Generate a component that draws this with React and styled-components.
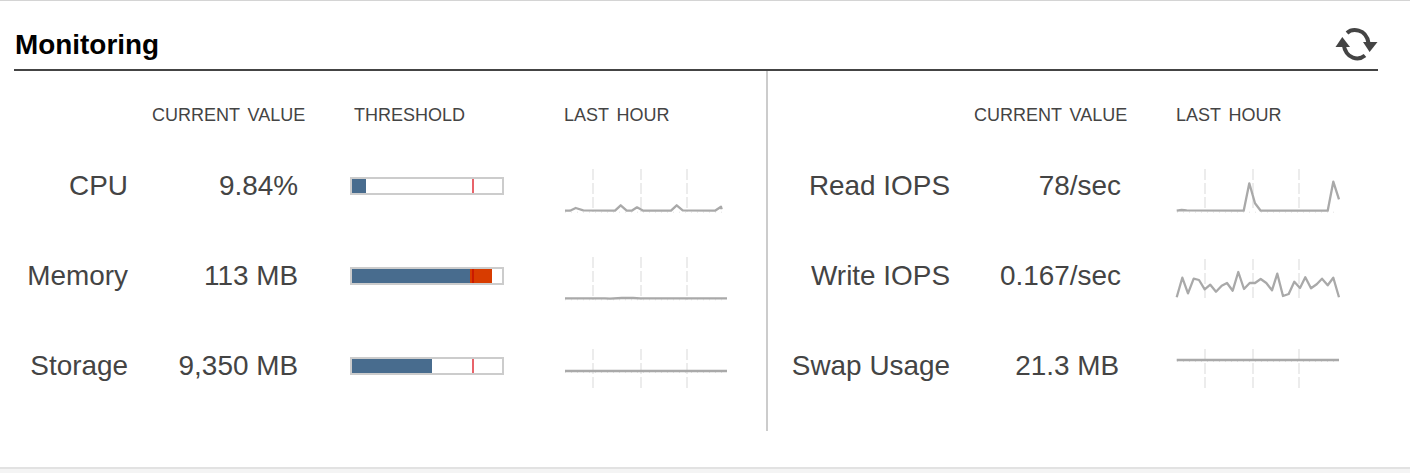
import React from "react";
import styled, { createGlobalStyle } from "styled-components";

const Global = createGlobalStyle`
  html, body { margin: 0; padding: 0; background: #fff; }
  body { font-family: "Liberation Sans", Arial, sans-serif; }
`;

const Page = styled.div`
  height: 473px;
  box-sizing: border-box;
  display: flex;
  flex-direction: column;
  border-top: 1px solid #d4d4d4;
  overflow: hidden;
`;
const Widget = styled.section`
  flex: 1;
  padding: 0 32px 0 14px;
`;
const Header = styled.header`
  height: 70px;
  box-sizing: border-box;
  display: flex;
  align-items: flex-end;
  justify-content: space-between;
  padding: 0 0 8px 1px;
  border-bottom: 2px solid #444;
`;
const Title = styled.h2`
  margin: 0;
  font-size: 27.9px;
  line-height: 32px;
  font-weight: 700;
  color: #000;
`;
const RefreshIcon = styled.svg`
  width: 46px;
  height: 36px;
  margin: 0 -1px -1px 0;
  display: block;
`;
const Body = styled.div`
  display: flex;
  height: 360px;
`;
const Panel = styled.div`
  display: grid;
  grid-template-columns: ${(p) => p.$cols};
  grid-template-rows: 70px repeat(3, 90px);
  align-content: start;
  width: ${(p) => p.$width}px;
  flex: none;
  box-sizing: border-box;
  ${(p) => p.$divided && "border-left: 2px solid #ccc;"}
`;
const Heading = styled.div`
  font-size: 18px;
  word-spacing: 2.8px;
  line-height: 22px;
  padding-top: 33px;
  padding-left: ${(p) => p.$indent || 0}px;
  color: #444;
  white-space: nowrap;
`;
const Label = styled.div`
  align-self: center;
  text-align: right;
  font-size: 27.9px;
  line-height: 32px;
  color: #444;
  white-space: nowrap;
`;
const Value = styled(Label)`
  padding-right: ${(p) => p.$inset || 0}px;
`;
const BarCell = styled.div`
  align-self: center;
`;
const Bar = styled.div`
  position: relative;
  box-sizing: border-box;
  width: 154px;
  height: 18px;
  border: 2px solid #ccc;
  background: #fff;
`;
const Fill = styled.div`
  height: 100%;
  background: ${(p) => p.$color};
`;
const Over = styled.div`
  position: absolute;
  top: 0;
  left: 118px;
  height: 100%;
  background: #d83c00;
`;
const Threshold = styled.div`
  position: absolute;
  top: 0;
  left: 120px;
  width: 2px;
  height: 100%;
  background: ${(p) => (p.$over ? "#cc1a00" : "#e8636a")};
`;
const Spark = styled.svg`
  display: block;
  width: 170px;
  height: 90px;
  overflow: visible;
`;

const toLocal = (pts, ox, oy) =>
  pts.map(([x, y]) => `${(x / 3 + ox).toFixed(1)},${(y / 3 + oy).toFixed(1)}`).join(" ");

const GRID = [29, 77, 123];

const Sparkline = ({ y1, y2, pts, ox, oy, base, w }) => (
  <Spark viewBox="0 0 170 90">
    {GRID.map((x) => (
      <line key={x} x1={x} x2={x} y1={y1} y2={y2} stroke="#e9e9e9" strokeWidth="1.7" strokeDasharray="11 3" />
    ))}
    {base && (
      <line x1="1" x2={w} y1={base + 1.5} y2={base + 1.5} stroke="#e4e4e4" strokeWidth="1" strokeDasharray="1 5" />
    )}
    <polyline points={toLocal(pts, ox, oy)} fill="none" stroke="#a9a9a9" strokeWidth="2.3" strokeLinejoin="round" />
  </Spark>
);

const left = [
  {
    label: "CPU", value: "9.84%", fill: 14,
    spark: { y1: 28, y2: 71, base: 69.7, w: 158, oy: 19, pts: [[30,152],[45,152],[62,144],[85,151],[180,152],[197,136],[215,152],[230,152],[246,142],[265,152],[348,152],[365,136],[383,151],[480,152],[498,140],[500,148]] },
  },
  {
    label: "Memory", value: "113 MB", fill: 118, over: 22,
    spark: { y1: 26, y2: 69, base: 67.3, w: 163, oy: -71, pts: [[30,415],[150,415],[165,416],[200,414],[235,414],[255,415],[516,415]] },
  },
  {
    label: "Storage", value: "9,350 MB", fill: 80,
    spark: { y1: 28, y2: 70, base: 50, w: 163, oy: -161, pts: [[30,633],[516,633]] },
  },
];

const right = [
  {
    label: "Read IOPS", value: "78/sec",
    spark: { y1: 28, y2: 70, base: 69.7, w: 162, oy: 19, pts: [[35,152],[50,150],[65,151],[236,152],[253,70],[270,130],[287,152],[488,152],[505,65],[522,118]] },
  },
  {
    label: "Write IOPS", value: "0.167/sec",
    spark: { y1: 28, y2: 70, w: 162, oy: -71, pts: [[35,412],[52,353],[69,400],[86,356],[102,360],[119,388],[136,374],[153,395],[170,377],[186,369],[203,392],[220,336],[237,387],[254,369],[270,369],[287,357],[304,369],[321,391],[337,341],[354,408],[371,402],[388,365],[405,384],[421,352],[438,385],[455,373],[471,356],[488,376],[505,353],[522,412]] },
  },
  {
    label: "Swap Usage", value: "21.3 MB", inset: 2,
    spark: { y1: 28, y2: 70, base: 39, w: 162, oy: -161, pts: [[35,600],[522,600]] },
  },
];

const LEFT_COLS = "114px 170px 52px 154px 60px 170px";
const RIGHT_COLS = "182px 171px 55px 170px";

const Footer = styled.footer`
  height: 4px;
  flex: none;
  background: #f4f4f4;
  border-top: 2px solid #e2e2e2;
`;

export default function App() {
  return (
    <>
      <Global />
      <Page>
        <Widget>
          <Header>
            <Title>Monitoring</Title>
            <RefreshIcon viewBox="0 0 46 36" aria-label="Refresh">
              <path d="M14 7 C19 2.5 33 2 35.5 17" fill="none" stroke="#444" strokeWidth="4" />
              <path d="M30 16 L44.5 16 L36.6 26 Z" fill="#444" />
              <path d="M32 29.5 C26 34.5 13 34 10.5 18" fill="none" stroke="#444" strokeWidth="4" />
              <path d="M2.5 21 L17 21 L9.3 11 Z" fill="#444" />
            </RefreshIcon>
          </Header>
          <Body>
            <Panel $cols={LEFT_COLS} $width={752}>
              <span />
              <Heading $indent={24}>CURRENT VALUE</Heading>
              <span />
              <Heading $indent={4}>THRESHOLD</Heading>
              <span />
              <Heading>LAST HOUR</Heading>
              {left.map((m) => (
                <React.Fragment key={m.label}>
                  <Label>{m.label}</Label>
                  <Value>{m.value}</Value>
                  <span />
                  <BarCell>
                    <Bar>
                      <Fill $color="#486c8e" style={{ width: m.fill }} />
                      {m.over && <Over style={{ width: m.over }} />}
                      <Threshold $over={!!m.over} />
                    </Bar>
                  </BarCell>
                  <span />
                  <Sparkline ox={-9} {...m.spark} />
                </React.Fragment>
              ))}
            </Panel>
            <Panel $cols={RIGHT_COLS} $width={612} $divided>
              <span />
              <Heading $indent={24}>CURRENT VALUE</Heading>
              <span />
              <Heading>LAST HOUR</Heading>
              {right.map((m) => (
                <React.Fragment key={m.label}>
                  <Label>{m.label}</Label>
                  <Value $inset={m.inset}>{m.value}</Value>
                  <span />
                  <Sparkline ox={-11} {...m.spark} />
                </React.Fragment>
              ))}
            </Panel>
          </Body>
        </Widget>
        <Footer />
      </Page>
    </>
  );
}
